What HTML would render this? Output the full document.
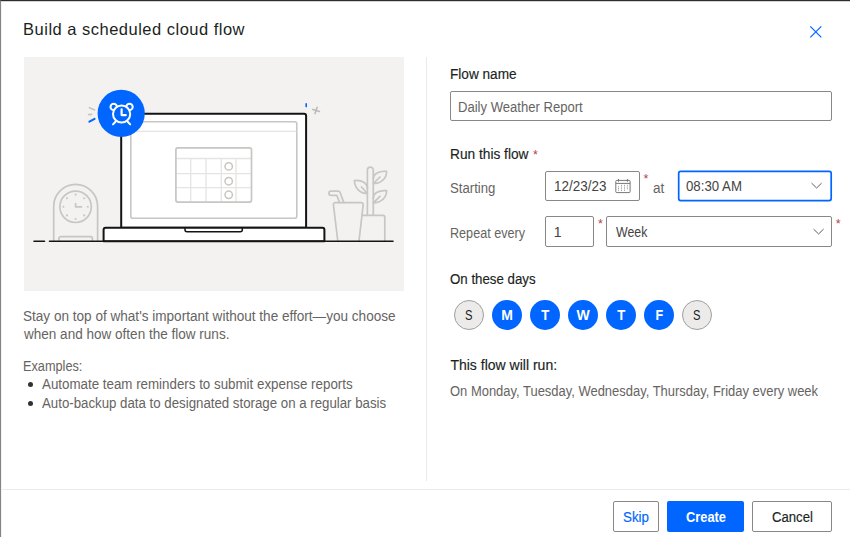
<!DOCTYPE html>
<html><head><meta charset="utf-8"><title>Build a scheduled cloud flow</title>
<style>
*{box-sizing:border-box;margin:0;padding:0}
html,body{width:850px;height:537px;overflow:hidden;background:#fff}
body{position:relative;font-family:"Liberation Sans",sans-serif;color:#201f1e;font-size:13px}
.abs{position:absolute;white-space:nowrap}
.t{position:absolute;white-space:nowrap;line-height:20px;height:20px}
.sb{-webkit-text-stroke:0.16px currentColor}
.b{font-weight:bold}
#frame{position:absolute;left:0;top:0;width:870px;height:560px;border-top:1px solid #2d2d2d;border-left:1px solid #858585;box-shadow:inset 0 1px 0 #d4d4d4,inset 1px 0 0 #f2f2f2}
#art{position:absolute;left:24px;top:57px;width:380px;height:234px;background:#f3f2f1}
#vsep{position:absolute;left:426px;top:57px;width:1px;height:424px;background:#edebe9}
#hsep{position:absolute;left:2px;top:489px;width:848px;height:1px;background:#edebe9}
.inp{position:absolute;border:1px solid #8a8886;border-radius:2px;background:#fff;height:30px}
.btn{position:absolute;top:501px;height:31px;border-radius:2px}
.day{position:absolute;top:300px;width:30px;height:30px;border-radius:50%;font-size:14px;text-align:center;line-height:30px}
.day.on{background:#0066ff;color:#fff;font-weight:bold}
.day.off{background:#edebe9;border:1px solid #a19f9d;color:#201f1e;line-height:28px}
.req{position:absolute;color:#b0444a;font-size:12.5px;line-height:14px}
.dot{position:absolute;width:5px;height:5px;border-radius:50%;background:#323130}
</style></head><body>
<div id="frame"></div>
<div id="art"></div>
<svg id="artsvg" class="abs" style="left:24px;top:57px" width="380" height="234" viewBox="24 57 380 234" fill="none" stroke-linecap="round" stroke-linejoin="round">
<!-- desk clock -->
<g stroke="#c8c6c4" stroke-width="1.7">
<path d="M53.7 241V206.4a21.95 21.95 0 0 1 43.9 0V241"/>
<circle cx="75.6" cy="206.8" r="15.7"/>
<path d="M59 241V238.6a2 2 0 0 1 2-2H90.4a2 2 0 0 1 2 2V241"/>
<path d="M75.6 203.6V206.8H81.6"/>
</g>
<g fill="#c8c6c4">
<circle cx="75.6" cy="194.6" r="1.05"/><circle cx="75.6" cy="219" r="1.05"/><circle cx="63.4" cy="206.8" r="1.05"/><circle cx="87.8" cy="206.8" r="1.05"/>
<circle cx="67" cy="198.2" r="1.05"/><circle cx="84.2" cy="198.2" r="1.05"/><circle cx="67" cy="215.4" r="1.05"/><circle cx="84.2" cy="215.4" r="1.05"/>
</g>
<!-- laptop screen -->
<path d="M121.2 227.7V115.7a2 2 0 0 1 2-2H304.1a2 2 0 0 1 2 2V227.7Z" fill="#fff" stroke="#141414" stroke-width="2"/>
<rect x="130.8" y="121.8" width="166" height="96.5" rx="2" stroke="#c8c6c4" stroke-width="1.6" fill="#fff"/>
<path d="M131.5 131.3H296" stroke="#e6e4e2" stroke-width="1.3"/>
<!-- calendar -->
<g stroke="#e6e4e2" stroke-width="1.3">
<path d="M176 158.5H251.5M176 173.6H251.5M176 187.6H251.5M190.7 158.5V202M206 158.5V202M221.3 158.5V202M236 158.5V202"/>
</g>
<rect x="175.9" y="147.8" width="75.6" height="54.3" rx="2" stroke="#c8c6c4" stroke-width="1.7"/>
<g stroke="#c8c6c4" stroke-width="1.5" fill="#fff">
<circle cx="228.7" cy="166.4" r="3.7"/><circle cx="228.7" cy="181.2" r="3.7"/><circle cx="228.7" cy="194.8" r="3.7"/>
</g>
<!-- laptop base -->
<path d="M103.6 241.2V229.7a2 2 0 0 1 2-2H322.4a2 2 0 0 1 2 2V241.2Z" fill="#fff" stroke="#141414" stroke-width="2"/>
<path d="M185 227.7V229.8a2 2 0 0 0 2 2H240.3a2 2 0 0 0 2-2V227.7" stroke="#141414" stroke-width="1.5"/>
<!-- alarm badge -->
<circle cx="121.2" cy="113.4" r="23.6" fill="#0066ff"/>
<g stroke="#fff" stroke-width="2">
<circle cx="113.700" cy="106.900" r="3.200"/><circle cx="129.500" cy="106.900" r="3.200"/>
<circle cx="121.600" cy="114" r="8.600" fill="#0066ff"/>
<path d="M121.600 109.300V115.100H125.800" stroke-width="2.200"/>
<path d="M115.500 121.800L113 124.400M127.700 121.800L130.200 124.400"/>
</g>
<path d="M89.400 107.700L94.600 110M88.600 114.700L91.600 114.400" stroke="#c8c6c4" stroke-width="1.700"/>
<path d="M89.400 121.700L94.600 118.900" stroke="#0066ff" stroke-width="2"/>
<path d="M306.200 103.800V106.600" stroke="#0066ff" stroke-width="1.6"/>
<path d="M312.800 109.400L319.400 111.400M317.200 107.200L315 113.600" stroke="#bdbbb9" stroke-width="1.600"/>
<!-- cup -->
<g stroke="#c8c6c4" stroke-width="1.7">
<!-- pot -->
<path d="M362 215.300H382.800a2 2 0 0 1 2 2V241"/>
<path d="M337.800 241L333.400 204.600a1.800 1.800 0 0 1 1.800-2H361.400a1.800 1.800 0 0 1 1.800 2L359 241"/>
<path d="M339.600 202.600L336.800 195.400H331a2.100 2.100 0 0 1 0-4.200H338.200a2 2 0 0 1 1.900 1.300L343.800 202.600"/>
<!-- stem -->
<path d="M367.400 215.300V170a2.950 2.950 0 0 1 5.900 0V215.300"/>
<!-- leaves -->
<path d="M367.400 193.500C360 193.500 354.600 188 354.400 180.600C362 179.600 367.400 183.500 367.400 188.500M367.400 193.500L361.500 187"/>
<path d="M373.300 183.500C381 183.500 386.600 178.500 386.600 171.400C379 170.500 373.300 174 373.300 179M373.300 183.500L380 177"/>
<path d="M373.300 202.800C381 202.800 386.600 197.800 386.600 190.700C379 189.800 373.300 193.300 373.300 198.300M373.300 202.800L380 196.300"/>
</g>
<!-- ground -->
<path d="M34 241.2H44.5M49.5 241.2H393" stroke="#141414" stroke-width="1.6"/>
</svg>
<svg class="abs" style="left:808.400px;top:24.200px" width="16" height="16" viewBox="0 0 16 16"><path d="M2.3 2.3L13.3 13.3M13.3 2.3L2.3 13.3" stroke="#0066ff" stroke-width="1.2" fill="none"/></svg>
<div id="vsep"></div><div id="hsep"></div>
<div class="inp" style="left:450px;top:91px;width:382px"></div>
<div class="inp" style="left:545px;top:171px;width:95px"></div>
<svg class="abs" style="left:676px;top:169px" width="158" height="34" viewBox="676 169 158 34"><rect x="678.7" y="171.400" width="152.500" height="29.200" rx="2" fill="#fff" stroke="#0066ff" stroke-width="1.700"/></svg>
<div class="inp" style="left:545px;top:216px;width:49px;height:31px"></div>
<div class="inp" style="left:606px;top:216px;width:226px;height:31px"></div>
<div class="btn" style="left:613px;width:46px;border:1px solid #8a8886;background:#fff"></div>
<div class="btn" style="left:667px;width:77px;background:#0066ff"></div>
<div class="btn" style="left:752px;width:80px;border:1px solid #8a8886;background:#fff"></div>
<div class="dot" style="left:28px;top:382px"></div><div class="dot" style="left:28px;top:401px"></div>
<div class="req" style="left:533px;top:147.5px">*</div>
<div class="req" style="left:643.5px;top:171.5px">*</div>
<div class="req" style="left:598px;top:217px">*</div>
<div class="req" style="left:835.7px;top:217px">*</div>
<div class="day off" style="left:454px"><span style="display:inline-block;transform:scaleX(0.8)">S</span></div>
<div class="day on" style="left:492px"><span style="display:inline-block;transform:scaleX(1)">M</span></div>
<div class="day on" style="left:530px"><span style="display:inline-block;transform:scaleX(0.94)">T</span></div>
<div class="day on" style="left:568px"><span style="display:inline-block;transform:scaleX(1)">W</span></div>
<div class="day on" style="left:606px"><span style="display:inline-block;transform:scaleX(0.94)">T</span></div>
<div class="day on" style="left:644px"><span style="display:inline-block;transform:scaleX(0.9)">F</span></div>
<div class="day off" style="left:682px"><span style="display:inline-block;transform:scaleX(0.8)">S</span></div>
<svg class="abs" style="left:614px;top:177px" width="19" height="18" viewBox="614 177 19 18" fill="none" stroke="#7a7876" stroke-width="1"><rect x="615.800" y="180.400" width="14.300" height="12.200" rx="1"/><path d="M615.800 183.400H630.100M618.500 179V181.800M627.400 179V181.800"/><path d="M618.500 186.300V191.200M621.500 184.800V191.200M624.500 184.800V191.200M627.400 184.800V189.600" stroke="#9b9997" stroke-width=".9" stroke-dasharray="1.100 .600"/></svg>
<svg class="abs" style="left:810px;top:181px" width="14" height="9" viewBox="0 0 14 9" fill="none" stroke="#605e5c" stroke-width="1"><path d="M1.600 2.100L6.600 7L11.600 2.100"/></svg>
<svg class="abs" style="left:811.800px;top:226.700px" width="14" height="9" viewBox="0 0 14 9" fill="none" stroke="#605e5c" stroke-width="1"><path d="M1.600 2.100L6.600 7L11.600 2.100"/></svg>
<div id="title" class="t" style="left:23.11px;top:19.00px;font-size:16.5px;color:#201f1e;letter-spacing:0.488px">Build a scheduled cloud flow</div>
<div id="p1a" class="t" style="left:22.98px;top:306.00px;font-size:14px;color:#666462;transform-origin:0 0;transform:scaleX(0.9689)">Stay on top of what's important without the effort—you choose</div>
<div id="p1b" class="t" style="left:23.81px;top:324.00px;font-size:14px;color:#666462;transform-origin:0 0;transform:scaleX(0.9668)">when and how often the flow runs.</div>
<div id="ex" class="t" style="left:22.81px;top:356.00px;font-size:14px;color:#666462;transform-origin:0 0;transform:scaleX(0.9079)">Examples:</div>
<div id="li1" class="t" style="left:42.30px;top:374.00px;font-size:14px;color:#666462;transform-origin:0 0;transform:scaleX(0.9527)">Automate team reminders to submit expense reports</div>
<div id="li2" class="t" style="left:42.30px;top:393.00px;font-size:14px;color:#666462;transform-origin:0 0;transform:scaleX(0.9468)">Auto-backup data to designated storage on a regular basis</div>
<div id="l1" class="t sb" style="left:449.64px;top:64.00px;font-size:14px;color:#201f1e;transform-origin:0 0;transform:scaleX(0.9729)">Flow name</div>
<div id="v1" class="t" style="left:457.98px;top:97.00px;font-size:14px;color:#666462;transform-origin:0 0;transform:scaleX(0.9334)">Daily Weather Report</div>
<div id="l2" class="t sb" style="left:449.83px;top:144.00px;font-size:14px;color:#201f1e;transform-origin:0 0;transform:scaleX(0.9795)">Run this flow</div>
<div id="l3" class="t" style="left:450.49px;top:178.00px;font-size:14px;color:#666462;transform-origin:0 0;transform:scaleX(0.9399)">Starting</div>
<div id="v2" class="t" style="left:553.76px;top:176.00px;font-size:14px;color:#454341;transform-origin:0 0;transform:scaleX(0.9613)">12/23/23</div>
<div id="l4" class="t" style="left:652.88px;top:178.00px;font-size:14px;color:#666462;transform-origin:0 0;transform:scaleX(0.9658)">at</div>
<div id="v3" class="t" style="left:685.99px;top:176.00px;font-size:14px;color:#454341;transform-origin:0 0;transform:scaleX(0.9463)">08:30 AM</div>
<div id="l5" class="t" style="left:449.92px;top:223.00px;font-size:14px;color:#666462;transform-origin:0 0;transform:scaleX(0.9005)">Repeat every</div>
<div id="v4" class="t" style="left:553.73px;top:222.00px;font-size:14px;color:#454341;letter-spacing:0.000px">1</div>
<div id="v5" class="t" style="left:615.50px;top:222.00px;font-size:14px;color:#454341;transform-origin:0 0;transform:scaleX(0.8811)">Week</div>
<div id="l6" class="t sb" style="left:449.58px;top:269.00px;font-size:14px;color:#201f1e;transform-origin:0 0;transform:scaleX(0.9486)">On these days</div>
<div id="l7" class="t sb" style="left:450.38px;top:355.00px;font-size:14px;color:#201f1e;letter-spacing:0.006px">This flow will run:</div>
<div id="l8" class="t" style="left:449.99px;top:381.00px;font-size:14px;color:#666462;transform-origin:0 0;transform:scaleX(0.9256)">On Monday, Tuesday, Wednesday, Thursday, Friday every week</div>
<div id="b1" class="t sb" style="left:623.08px;top:507.00px;font-size:14px;color:#0066ff;transform-origin:0 0;transform:scaleX(0.9531)">Skip</div>
<div id="b2" class="t b" style="left:686.10px;top:507.00px;font-size:14px;color:#fff;transform-origin:0 0;transform:scaleX(0.9184)">Create</div>
<div id="b3" class="t sb" style="left:771.78px;top:507.00px;font-size:14px;color:#201f1e;transform-origin:0 0;transform:scaleX(0.9381)">Cancel</div>
</body></html>
